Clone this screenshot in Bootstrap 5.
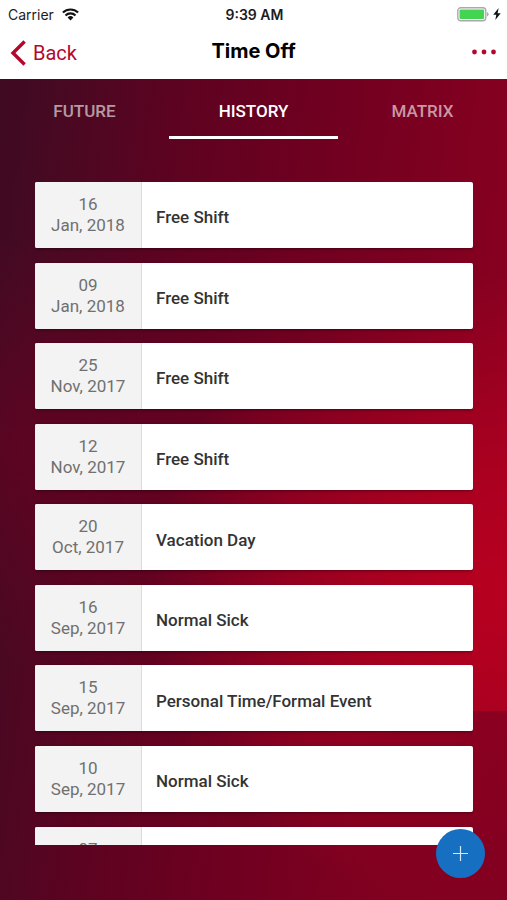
<!DOCTYPE html>
<html lang="en">
<head>
<meta charset="utf-8">
<meta name="viewport" content="width=device-width, initial-scale=1">
<title>Time Off</title>
<link href="https://cdn.jsdelivr.net/npm/bootstrap@5.3.0/dist/css/bootstrap.min.css" rel="stylesheet">
<style>
  body {
    font-family: Roboto, "Liberation Sans", sans-serif;
    background:
      linear-gradient(270deg, rgba(126, 0, 32, .75), rgba(126, 0, 32, .6) 40%, rgba(126, 0, 32, 0)) right bottom / 45% 21% no-repeat,
      radial-gradient(ellipse 36% 24% at 4% 50%, rgba(112, 0, 34, .5), rgba(112, 0, 34, 0)),
      radial-gradient(ellipse 74% 36% at 102% 66%, rgba(188, 0, 32, .95), rgba(182, 0, 32, .75) 40%, rgba(160, 0, 32, 0) 100%),
      linear-gradient(97deg, #3f0a22 0%, #430a22 7%, #5c0321 30%, #6e0020 52%, #860020 85%, #8c0020 100%);
  }
  .ios-text { font-family: Inter, "Liberation Sans", sans-serif; }
  .status-bar { height: 28px; font-size: 14px; color: #1c1c1e; padding: 0 6px 0 8px; }
  .title-bar { height: 51px; padding: 0 10px 4px; }
  .brand-red, .brand-red:hover { color: #b3082d; }
  .back-link { font-family: Roboto, "Liberation Sans", sans-serif; font-size: 20px; gap: 6px; padding-top: 3px; }
  .screen-title { font-size: 20px; color: #000; padding-bottom: 2px; }
  .tab-link {
    height: 60px; padding: 8px 0 0; font-size: 17px; font-weight: 500;
    color: rgba(255, 255, 255, .6); border: 0; border-bottom: 3px solid transparent; border-radius: 0;
  }
  .tab-link:hover { color: #fff; }
  .tab-link.active { color: #fff; border-bottom-color: #fff; }
  .day-list { margin: 43px 34px 55px 35px; row-gap: 2.2%; overflow-y: auto; scrollbar-width: none; min-height: 0; }
  .day-list::-webkit-scrollbar { display: none; }
  .day-item { min-height: 66px; background: #fff; border-radius: 2px; box-shadow: 0 1px 3px rgba(0, 0, 0, .4); overflow: hidden; }
  .day-date {
    width: 107px; padding: 12px 0; font-size: 17px; line-height: 21px;
    color: #707070; background: #f3f3f3; border-right: 1px solid #dcdcdc;
  }
  .day-name { font-size: 17px; font-weight: 500; color: #333; padding: 6px 14px 0; }
  .add-button { right: 22px; bottom: 22px; width: 49px; height: 49px; background: #176fc1; }
</style>
<script src="https://cdn.jsdelivr.net/npm/bootstrap@5.3.0/dist/js/bootstrap.bundle.min.js"></script>
</head>
<body class="vh-100 d-flex flex-column overflow-hidden">
  <header class="bg-white ios-text flex-shrink-0">
    <div class="status-bar row g-0 align-items-center">
      <div class="col d-flex align-items-center gap-2">
        <span>Carrier</span>
        <svg width="17" height="13" viewBox="0 0 17 13" fill="none" stroke="#111" stroke-width="2.1" aria-hidden="true">
          <path d="M.9 4.6a10.8 10.8 0 0 1 15.2 0M3.5 7.4a7.1 7.1 0 0 1 10 0"/>
          <path d="M5.6 9.5a4.1 4.1 0 0 1 5.8 0L8.500 12.500z" fill="#111" stroke="none"/>
        </svg>
      </div>
      <div class="col-auto fw-semibold">9:39 AM</div>
      <div class="col d-flex align-items-center justify-content-end gap-1">
        <svg width="32" height="15" viewBox="0 0 32 15" aria-hidden="true">
          <rect x=".8" y=".8" width="28" height="13" rx="3" fill="#fff" stroke="#a9a9ab" stroke-width="1.4"/>
          <rect x="2.5" y="2.5" width="24.6" height="9.6" rx="1" fill="#43d551"/>
          <path d="M30 5v4.500q1.600-.6 1.600-2.200T30 5z" fill="#a9a9ab"/>
        </svg>
        <svg width="8" height="12" viewBox="0 0 8 12" fill="#111" aria-hidden="true"><path d="M5.600 0L.3 6.700h3L2.300 12 7.700 5.200H4.600z"/></svg>
      </div>
    </div>
    <nav class="title-bar row g-0 align-items-center" aria-label="Screen">
      <div class="col d-flex">
        <a href="#" class="back-link brand-red d-inline-flex align-items-center text-decoration-none">
          <svg width="17" height="26" viewBox="0 0 17 26" fill="none" stroke="currentColor" stroke-width="3.4" aria-hidden="true"><path d="M14.600 1.500L3 13l11.600 11.500"/></svg>
          <span>Back</span>
        </a>
      </div>
      <h1 class="screen-title col-auto fw-bold m-0">Time Off</h1>
      <div class="col d-flex justify-content-end">
        <button type="button" class="btn p-0 border-0 brand-red d-flex" aria-label="More options">
          <svg width="26" height="6" viewBox="0 0 26 6" fill="currentColor" aria-hidden="true"><circle cx="3.500" cy="3" r="2.400"/><circle cx="13" cy="3" r="2.400"/><circle cx="22.500" cy="3" r="2.400"/></svg>
        </button>
      </div>
    </nav>
  </header>

  <div class="row g-0 flex-shrink-0" role="tablist">
    <div class="col"><button type="button" role="tab" aria-selected="false" class="tab-link btn w-100">FUTURE</button></div>
    <div class="col"><button type="button" role="tab" aria-selected="true" class="tab-link btn w-100 active">HISTORY</button></div>
    <div class="col"><button type="button" role="tab" aria-selected="false" class="tab-link btn w-100">MATRIX</button></div>
  </div>

  <ul class="day-list list-unstyled d-flex flex-column flex-fill">
    <li class="day-item d-flex flex-shrink-0"><div class="day-date text-center">16<br>Jan, 2018</div><div class="day-name align-self-center">Free Shift</div></li>
    <li class="day-item d-flex flex-shrink-0"><div class="day-date text-center">09<br>Jan, 2018</div><div class="day-name align-self-center">Free Shift</div></li>
    <li class="day-item d-flex flex-shrink-0"><div class="day-date text-center">25<br>Nov, 2017</div><div class="day-name align-self-center">Free Shift</div></li>
    <li class="day-item d-flex flex-shrink-0"><div class="day-date text-center">12<br>Nov, 2017</div><div class="day-name align-self-center">Free Shift</div></li>
    <li class="day-item d-flex flex-shrink-0"><div class="day-date text-center">20<br>Oct, 2017</div><div class="day-name align-self-center">Vacation Day</div></li>
    <li class="day-item d-flex flex-shrink-0"><div class="day-date text-center">16<br>Sep, 2017</div><div class="day-name align-self-center">Normal Sick</div></li>
    <li class="day-item d-flex flex-shrink-0"><div class="day-date text-center">15<br>Sep, 2017</div><div class="day-name align-self-center">Personal Time/Formal Event</div></li>
    <li class="day-item d-flex flex-shrink-0"><div class="day-date text-center">10<br>Sep, 2017</div><div class="day-name align-self-center">Normal Sick</div></li>
    <li class="day-item d-flex flex-shrink-0"><div class="day-date text-center">07</div></li>
  </ul>

  <button type="button" class="add-button btn rounded-circle position-fixed border-0 p-0 d-flex align-items-center justify-content-center" aria-label="Add time off">
    <svg width="15" height="15" viewBox="0 0 15 15" stroke="#d5e8f8" stroke-width="1.200" aria-hidden="true"><path d="M7.500 0v15M0 7.500h15"/></svg>
  </button>
</body>
</html>
